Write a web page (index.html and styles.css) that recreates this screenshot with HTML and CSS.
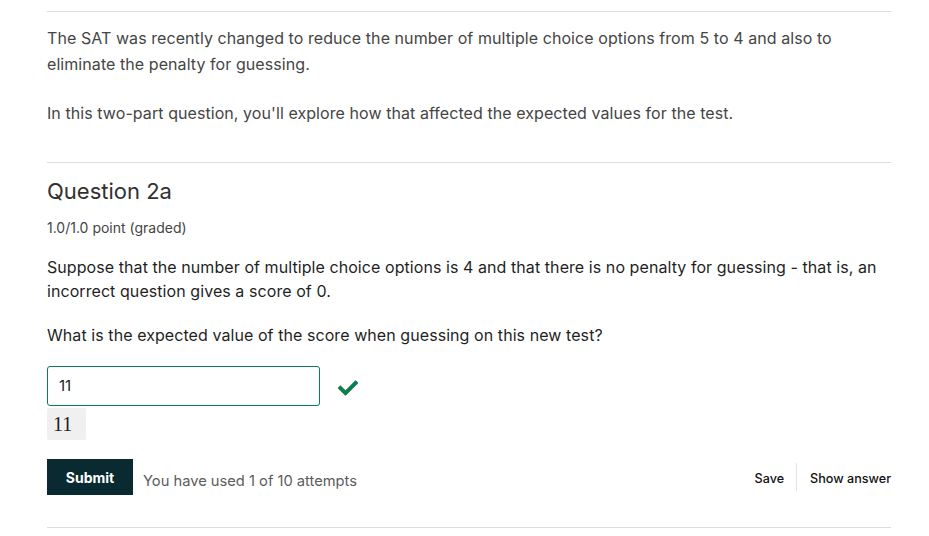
FILE: index.html
```html
<!DOCTYPE html>
<html>
<head>
<meta charset="utf-8">
<link rel="stylesheet" href="styles.css">
</head>
<body>
<div class="page">
  <section class="intro">
    <p>The SAT was recently changed to reduce the number of multiple choice options from 5 to 4 and also to eliminate the penalty for guessing.</p>
    <p>In this two-part question, you'll explore how that affected the expected values for the test.</p>
  </section>
  <section class="problem">
    <h3 class="title">Question 2a</h3>
    <div class="points">1.0/1.0 point (graded)</div>
    <p class="q">Suppose that the number of multiple choice options is 4 and that there is no penalty for guessing - that is, an incorrect question gives a score of 0.</p>
    <p class="q q2">What is the expected value of the score when guessing on this new test?</p>
    <div class="answer">
      <div class="input">11</div>
      <svg class="check" width="20" height="16" viewBox="0 0 512 400"><path fill="#0d7d4d" d="M174 385L7 218c-10-10-10-26 0-36l36-36c10-10 26-10 36 0l113 112L433 17c10-10 26-10 36 0l36 36c10 10 10 26 0 36L210 385c-10 10-26 10-36 0z"/></svg>
    </div>
    <div class="preview">11</div>
    <div class="actions">
      <button class="submit">Submit</button>
      <span class="attempts">You have used 1 of 10 attempts</span>
      <div class="spacer"></div>
      <span class="link">Save</span>
      <span class="sep"></span>
      <span class="link">Show answer</span>
    </div>
  </section>
</div>
</body>
</html>
```
FILE: styles.css
```css
* { box-sizing: border-box; }
body { margin: 0; background: #fff; font-family: Inter, "Noto Sans", sans-serif; }
.page { width: 844px; margin-left: 47px; margin-top: 11px; }
.intro { border-top: 1px solid #ddd; padding-top: 13px; border-bottom: 1px solid #ddd; padding-bottom: 36px; }
.intro p { margin: 0; font-size: 16px; line-height: 26px; color: #454545; letter-spacing: 0.07px; }
.intro p + p { margin-top: 23px; }
.problem { padding-top: 14px; border-bottom: 1px solid #ddd; padding-bottom: 32px; }
.title { margin: 0; font-size: 22px; font-weight: 400; line-height: 28px; color: #313131; }
.points { margin-top: 13px; font-size: 14px; line-height: 20px; color: #454545; }
.q { margin: 17px 0 0; font-size: 16px; line-height: 24px; color: #1f1f1f; letter-spacing: 0.07px; }
.q2 { margin-top: 20px; }
.answer { margin-top: 19px; display: flex; align-items: center; }
.input { width: 273px; height: 40px; border: 1px solid #0d7d4d; border-radius: 3px; padding: 0 11px; font-size: 15px; line-height: 38px; color: #222; }
.check { margin-left: 18px; margin-top: 4px; }
.preview { margin-top: 2px; width: 39px; height: 32px; background: #f0f0f0; border-radius: 2px; font-family: "Liberation Serif", serif; font-size: 20px; line-height: 32px; color: #222; padding-left: 6px; }
.actions { margin-top: 19px; display: flex; align-items: center; }
.submit { width: 86px; height: 36px; border: 0; background: #0a2a32; color: #fff; font-family: Inter, sans-serif; font-weight: 700; font-size: 14px; padding: 0; }
.attempts { margin-left: 10px; margin-top: 8px; font-size: 14.7px; color: #5c5c5c; }
.spacer { flex: 1; }
.link { font-size: 12.6px; color: #111; font-weight: 500; margin-top: 2px; }
.sep { width: 1px; height: 28px; background: #e4e4e4; margin: 0 13px 0 12px; }
```
